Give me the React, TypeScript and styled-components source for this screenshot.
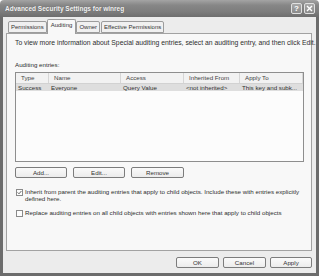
import React from 'react';
import styled, { createGlobalStyle } from 'styled-components';

const GlobalStyle = createGlobalStyle`
  html, body {
    margin: 0;
    padding: 0;
    background: #ffffff;
  }
  body {
    font-family: 'Liberation Sans', Arial, sans-serif;
    color: #2e2e2e;
  }
`;

const FONT = '6.2px';

// Ventana completa (barra de título + marco)
const Window = styled.div`
  width: 319px;
  height: 276px;
  display: flex;
  flex-direction: column;
  overflow: hidden;
`;

const TitleBar = styled.div`
  height: 17px;
  flex: none;
  display: flex;
  align-items: center;
  padding: 0 4px 0 5px;
  border-radius: 4px 4px 0 0;
  background: linear-gradient(#a4a4a4 0%, #878787 30%, #7c7c7c 70%, #6e6e6e 100%);
`;

const Title = styled.span`
  flex: 1;
  font-size: 6.5px;
  font-weight: bold;
  color: #f4f4f4;
  text-shadow: 0 0 1px #555;
`;

const CaptionButton = styled.div`
  width: 11px;
  height: 11px;
  margin-left: 2px;
  box-sizing: border-box;
  border: 1px solid #e0e0e0;
  border-radius: 2px;
  background: linear-gradient(#a8a8a8, #8a8a8a);
  color: #ffffff;
  display: flex;
  align-items: center;
  justify-content: center;
  font-size: 8px;
  font-weight: bold;
  line-height: 1;
`;

const Frame = styled.div`
  flex: 1;
  display: flex;
  flex-direction: column;
  background: #ececec;
  border: 3px solid #6c6c6c;
  border-top: none;
  padding: 2px 4px 0 3px;
`;

const TabStrip = styled.div`
  display: flex;
  align-items: flex-end;
  padding-left: 2px;
  height: 14px;
  position: relative;
  z-index: 1;
`;

const Tab = styled.div<{ $active?: boolean }>`
  box-sizing: border-box;
  height: ${(p) => (p.$active ? '15px' : '12px')};
  margin-bottom: ${(p) => (p.$active ? '-1px' : '0')};
  margin-left: ${(p) => (p.$active ? '-1px' : '0')};
  margin-right: ${(p) => (p.$active ? '0' : '1px')};
  padding: 0 ${(p) => (p.$active ? '3px' : '2px')};
  border: 1px solid #9c9c9c;
  border-bottom: ${(p) => (p.$active ? 'none' : '1px solid #9c9c9c')};
  border-radius: 2px 2px 0 0;
  background: ${(p) => (p.$active ? '#f8f8f8' : '#f0f0f0')};
  font-size: 6px;
  line-height: ${(p) => (p.$active ? '11px' : '10px')};
  white-space: nowrap;
  color: #333;
`;

const Panel = styled.div`
  height: 218px;
  box-sizing: border-box;
  border: 1px solid #a2a2a2;
  background: #f8f8f8;
  padding: 5px 7px 0 8px;
  display: flex;
  flex-direction: column;
`;

const Text = styled.div<{ $top?: number; $size?: string }>`
  font-size: ${(p) => p.$size ?? FONT};
  line-height: 8px;
  margin-top: ${(p) => p.$top ?? 0}px;
  white-space: nowrap;
`;

const ListBox = styled.div`
  margin-top: 3px;
  height: 90px;
  box-sizing: border-box;
  border: 1px solid #8e8e8e;
  background: #fcfcfc;
`;

const COLUMNS = '33px 72px 63px 56px 1fr';

const HeaderRow = styled.div`
  display: grid;
  grid-template-columns: ${COLUMNS};
  height: 10px;
  background: #f2f2f2;
  border-bottom: 1px solid #d2d2d2;
`;

const HeaderCell = styled.div`
  font-size: ${FONT};
  line-height: 10px;
  padding-left: 5px;
  border-right: 1px solid #d6d6d6;
  color: #444;
  white-space: nowrap;
`;

const EntryRow = styled.div<{ $selected?: boolean }>`
  display: grid;
  grid-template-columns: ${COLUMNS};
  height: 7px;
  background: ${(p) => (p.$selected ? '#dedede' : 'transparent')};
`;

const Cell = styled.div`
  font-size: ${FONT};
  line-height: 7px;
  padding-left: 2px;
  white-space: nowrap;
  overflow: hidden;
`;

const ButtonRow = styled.div<{ $end?: boolean }>`
  display: flex;
  gap: ${(p) => (p.$end ? '4px' : '6px')};
  justify-content: ${(p) => (p.$end ? 'flex-end' : 'flex-start')};
`;

const Button = styled.div<{ $w: number }>`
  width: ${(p) => p.$w}px;
  height: 11px;
  box-sizing: border-box;
  border: 1px solid #7c7c7c;
  border-radius: 2px;
  background: linear-gradient(#fafafa, #ececec);
  font-size: ${FONT};
  line-height: 9px;
  text-align: center;
  color: #333;
`;

const CheckRow = styled.div<{ $top: number }>`
  display: flex;
  align-items: flex-start;
  gap: 2px;
  margin-top: ${(p) => p.$top}px;
  padding-left: 1px;
`;

const Box = styled.div`
  flex: none;
  width: 7px;
  height: 7px;
  margin-top: 0.5px;
  box-sizing: border-box;
  border: 1px solid #8a8a8a;
  background: #fdfdfd;
  display: flex;
  align-items: center;
  justify-content: center;
`;

const CheckText = styled.div`
  font-size: ${FONT};
  line-height: 7px;
  white-space: nowrap;
`;

const Footer = styled.div`
  padding: 6px 0 0;
`;

const columns = ['Type', 'Name', 'Access', 'Inherited From', 'Apply To'];
const entry = ['Success', 'Everyone', 'Query Value', '<not inherited>', 'This key and subk...'];

function Check({ checked }: { checked?: boolean }) {
  return (
    <Box>
      {checked && (
        <svg width="5" height="5" viewBox="0 0 5 5">
          <path d="M0.6 2.4 L2 3.8 L4.4 1" stroke="#555" strokeWidth="0.9" fill="none" />
        </svg>
      )}
    </Box>
  );
}

export default function App() {
  return (
    <>
      <GlobalStyle />
      <Window>
        <TitleBar>
          <Title>Advanced Security Settings for winreg</Title>
          <CaptionButton>?</CaptionButton>
          <CaptionButton>
            <svg width="7" height="7" viewBox="0 0 7 7">
              <path d="M1 1 L6 6 M6 1 L1 6" stroke="#fff" strokeWidth="1.4" />
            </svg>
          </CaptionButton>
        </TitleBar>
        <Frame>
          <TabStrip>
            <Tab>Permissions</Tab>
            <Tab $active>Auditing</Tab>
            <Tab>Owner</Tab>
            <Tab>Effective Permissions</Tab>
          </TabStrip>
          <Panel>
            <Text $size="6.8px">
              To view more information about Special auditing entries, select an auditing entry, and then click Edit.
            </Text>
            <Text $top={14}>Auditing entries:</Text>
            <ListBox>
              <HeaderRow>
                {columns.map((c) => (
                  <HeaderCell key={c}>{c}</HeaderCell>
                ))}
              </HeaderRow>
              <EntryRow $selected>
                {entry.map((c) => (
                  <Cell key={c}>{c}</Cell>
                ))}
              </EntryRow>
            </ListBox>
            <ButtonRow style={{ marginTop: 5 }}>
              <Button $w={52}>Add...</Button>
              <Button $w={52}>Edit...</Button>
              <Button $w={53}>Remove</Button>
            </ButtonRow>
            <CheckRow $top={10}>
              <Check checked />
              <CheckText>
                Inherit from parent the auditing entries that apply to child objects. Include these with entries explicitly
                <br />
                defined here.
              </CheckText>
            </CheckRow>
            <CheckRow $top={7}>
              <Check />
              <CheckText>Replace auditing entries on all child objects with entries shown here that apply to child objects</CheckText>
            </CheckRow>
          </Panel>
          <Footer>
            <ButtonRow $end>
              <Button $w={43}>OK</Button>
              <Button $w={43}>Cancel</Button>
              <Button $w={42}>Apply</Button>
            </ButtonRow>
          </Footer>
        </Frame>
      </Window>
    </>
  );
}
